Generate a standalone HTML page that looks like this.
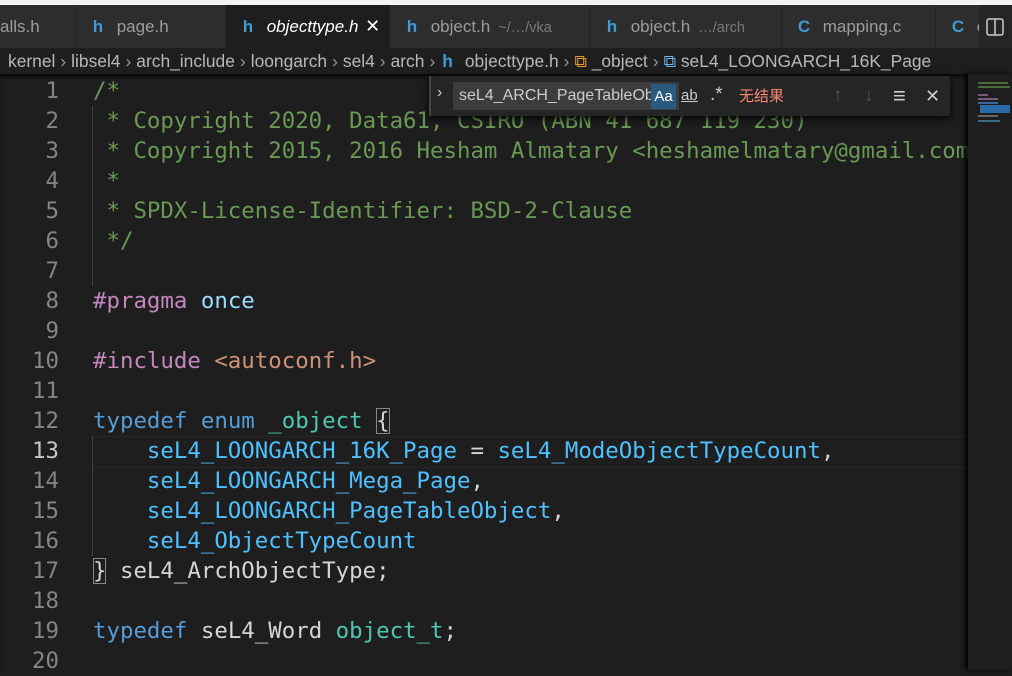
<!DOCTYPE html>
<html><head><meta charset="utf-8"><style>
*{margin:0;padding:0;box-sizing:border-box}
body{width:1012px;height:670px;overflow:hidden;background:#1e1e1e;position:relative;font-family:"Liberation Sans","Noto Sans CJK SC",sans-serif}
.top{position:absolute;left:0;top:0;width:1012px;height:5px;background:#f3f3f3}
.tabs{position:absolute;left:0;top:5px;width:1012px;height:43px;background:#252526}
.tab{position:absolute;top:0;height:43px;background:#2d2d2d;border-right:1px solid #252526;color:#9d9d9d;font-size:17px;line-height:43px;white-space:nowrap;overflow:hidden}
.tab .h{color:#3f9bd6;font-weight:bold;font-size:17px;display:inline-block;width:28px;text-align:center}
.tab .d{color:#7a7a7a;font-size:14.5px;margin-left:8px}
.tab.act{background:#1e1e1e;color:#fff;font-style:italic}
.bc{position:absolute;left:0;top:48px;width:1012px;height:26px;background:#1e1e1e;color:#b8b8b8;font-size:17.4px;line-height:26px;white-space:nowrap;padding-left:8px}
.bc .s{color:#999;margin:0 5px}
.ed{position:absolute;left:0;top:74px;width:968px;height:596px;box-shadow:inset 0 4px 4px -2px #000}
.ln{position:absolute;left:0;width:59px;text-align:right;color:#858585;font-family:"DejaVu Sans Mono",monospace;font-size:22.4px;height:30px;line-height:30px}
.cl{position:absolute;left:93px;font-family:"DejaVu Sans Mono",monospace;font-size:22.4px;height:30px;line-height:30px;white-space:pre;color:#d4d4d4}
.c{color:#6a9955}.k{color:#569cd6}.p{color:#c586c0}.t{color:#4ec9b0}.e{color:#4fc1ff}.s2{color:#ce9178}
.guide{position:absolute;left:92px;width:1px;background:#404040}
.find{position:absolute;left:429px;top:76px;width:521px;height:40px;background:#252526;box-shadow:0 2px 8px #000;border-left:2px solid #454545}
.inp{position:absolute;left:22px;top:6px;width:226px;height:28px;background:#3c3c3c;color:#ccc;font-size:16px;line-height:28px;padding-left:6px;overflow:hidden;white-space:nowrap}
.mini{position:absolute;left:968px;top:74px;width:44px;height:596px;background:#1e1e1e;box-shadow:-3px 0 5px #000}
</style></head><body>
<div class="top"></div>
<div class="tabs">
<div class="tab" style="left:0;width:76px;padding-left:0">alls.h</div>
<div class="tab" style="left:76px;width:150px;padding-left:8px"><span class="h">h</span> page.h</div>
<div class="tab act" style="left:226px;width:164px;padding-left:8px"><span class="h" style="font-style:normal">h</span> objecttype.h <span style="font-style:normal;font-size:18px;margin-left:2px">✕</span></div>
<div class="tab" style="left:390px;width:200px;padding-left:8px"><span class="h">h</span> object.h<span class="d">~/…/vka</span></div>
<div class="tab" style="left:590px;width:192px;padding-left:8px"><span class="h">h</span> object.h<span class="d">…/arch</span></div>
<div class="tab" style="left:782px;width:154px;padding-left:8px"><span class="h">C</span> mapping.c</div>
<div class="tab" style="left:936px;width:44px;padding-left:8px"><span class="h">C</span> c</div>
<svg style="position:absolute;left:986px;top:13px" width="18" height="18"><rect x="1" y="1" width="16" height="16" rx="2" fill="none" stroke="#ccc" stroke-width="1.5"/><line x1="9" y1="1" x2="9" y2="17" stroke="#ccc" stroke-width="1.5"/></svg>
</div>
<div class="bc">kernel<span class="s">›</span>libsel4<span class="s">›</span>arch_include<span class="s">›</span>loongarch<span class="s">›</span>sel4<span class="s">›</span>arch<span class="s">›</span><span style="color:#3f9bd6;font-weight:bold;margin:0 12px 0 2px">h</span>objecttype.h<span class="s">›</span><span style="color:#e59a2c">⧉</span> _object<span class="s">›</span><span style="color:#6fb3e8">⧉</span> seL4_LOONGARCH_16K_Page</div>
<div class="ed">
<div style="position:absolute;left:92px;top:362px;width:876px;height:32px;border-top:1px solid #282828;border-bottom:1px solid #282828"></div>
<div class="guide" style="top:32px;height:180px"></div>
<div class="guide" style="top:362px;height:120px"></div>
</div>
<div style="position:absolute;left:0;top:76px">
<div class="ln" style="top:0">1</div><div class="ln" style="top:30px">2</div><div class="ln" style="top:60px">3</div><div class="ln" style="top:90px">4</div><div class="ln" style="top:120px">5</div><div class="ln" style="top:150px">6</div><div class="ln" style="top:180px">7</div><div class="ln" style="top:210px">8</div><div class="ln" style="top:240px">9</div><div class="ln" style="top:270px">10</div><div class="ln" style="top:300px">11</div><div class="ln" style="top:330px">12</div><div class="ln" style="top:360px;color:#c6c6c6">13</div><div class="ln" style="top:390px">14</div><div class="ln" style="top:420px">15</div><div class="ln" style="top:450px">16</div><div class="ln" style="top:480px">17</div><div class="ln" style="top:510px">18</div><div class="ln" style="top:540px">19</div><div class="ln" style="top:570px">20</div>
<div class="cl c" style="top:0">/*</div>
<div class="cl c" style="top:30px"> * Copyright 2020, Data61, CSIRO (ABN 41 687 119 230)</div>
<div class="cl c" style="top:60px"> * Copyright 2015, 2016 Hesham Almatary &lt;heshamelmatary@gmail.com&gt;</div>
<div class="cl c" style="top:90px"> *</div>
<div class="cl c" style="top:120px"> * SPDX-License-Identifier: BSD-2-Clause</div>
<div class="cl c" style="top:150px"> */</div>
<div class="cl" style="top:210px"><span class="p">#pragma</span> <span style="color:#9cdcfe">once</span></div>
<div class="cl" style="top:270px"><span class="p">#include</span> <span class="s2">&lt;autoconf.h&gt;</span></div>
<div class="cl" style="top:330px"><span class="k">typedef</span> <span class="k">enum</span> <span class="t">_object</span> <span style="outline:1px solid #888;outline-offset:-1px">{</span></div>
<div class="cl" style="top:360px">    <span class="e">seL4_LOONGARCH_16K_Page</span> = <span class="e">seL4_ModeObjectTypeCount</span>,</div>
<div class="cl" style="top:390px">    <span class="e">seL4_LOONGARCH_Mega_Page</span>,</div>
<div class="cl" style="top:420px">    <span class="e">seL4_LOONGARCH_PageTableObject</span>,</div>
<div class="cl" style="top:450px">    <span class="e">seL4_ObjectTypeCount</span></div>
<div class="cl" style="top:480px"><span style="outline:1px solid #888;outline-offset:-1px">}</span> seL4_ArchObjectType;</div>
<div class="cl" style="top:540px"><span class="k">typedef</span> seL4_Word <span class="t">object_t</span>;</div>
</div>
<div class="mini">
<div style="position:absolute;left:10px;top:8px;width:30px;height:2px;background:#4a6a3a"></div>
<div style="position:absolute;left:10px;top:12px;width:32px;height:2px;background:#4a6a3a"></div>
<div style="position:absolute;left:10px;top:20px;width:10px;height:2px;background:#7a5a7a"></div>
<div style="position:absolute;left:10px;top:24px;width:20px;height:2px;background:#7a5a7a"></div>
<div style="position:absolute;left:10px;top:28px;width:20px;height:2px;background:#3a6a9a"></div>
<div style="position:absolute;left:12px;top:31px;width:30px;height:8px;background:#2a6aa8"></div>
<div style="position:absolute;left:10px;top:41px;width:20px;height:2px;background:#666"></div>
<div style="position:absolute;left:10px;top:46px;width:22px;height:2px;background:#3a6a8a"></div>
</div>
<div class="find">
<div style="position:absolute;left:6px;top:8px;color:#ccc;font-size:16px">›</div>
<div class="inp">seL4_ARCH_PageTableOb</div>
<div style="position:absolute;left:220px;top:8px;width:25px;height:25px;background:#2b5a80;color:#fff;font-size:15px;line-height:25px;text-align:center">Aa</div>
<div style="position:absolute;left:250px;top:8px;color:#ccc;font-size:15px;line-height:24px;text-decoration:underline">ab</div>
<div style="position:absolute;left:279px;top:7px;color:#ccc;font-size:19px;line-height:24px">.*</div>
<div style="position:absolute;left:308px;top:8px;color:#f48771;font-size:15px;line-height:24px;font-family:'Noto Sans CJK SC',sans-serif">无结果</div>
<div style="position:absolute;left:402px;top:8px;color:#555;font-size:19px;line-height:24px">↑</div>
<div style="position:absolute;left:433px;top:8px;color:#555;font-size:19px;line-height:24px">↓</div>
<div style="position:absolute;left:462px;top:8px;color:#ccc;font-size:22px;line-height:24px">≡</div>
<div style="position:absolute;left:494px;top:8px;color:#ccc;font-size:18px;line-height:24px">✕</div>
</div>
</body></html>
